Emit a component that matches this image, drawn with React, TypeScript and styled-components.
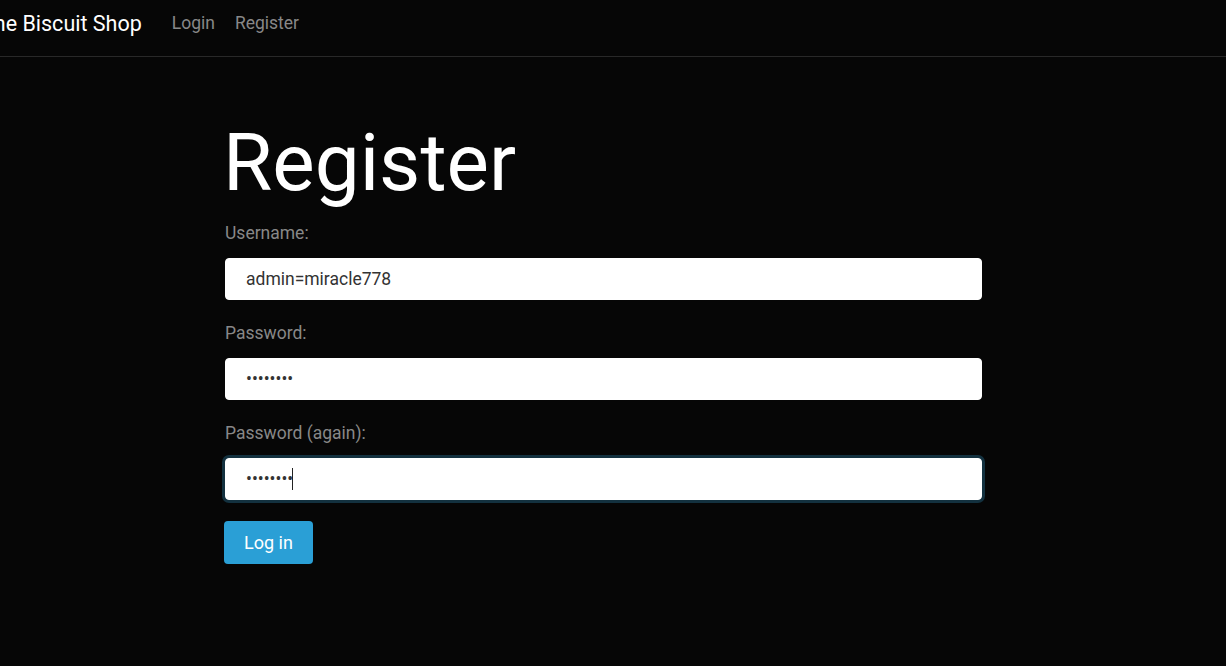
import React from "react";
import styled, { createGlobalStyle } from "styled-components";

const Global = createGlobalStyle`
  html, body { margin: 0; padding: 0; background: #060606; overflow: hidden; }
  body { font-family: Roboto, "Liberation Sans", sans-serif; color: #adafae; }
  * { box-sizing: border-box; }
`;

const Page = styled.div`
  width: 1226px;
  height: 666px;
  background: #060606;
`;

const Navbar = styled.nav`
  height: 57px;
  border-bottom: 1px solid #282828;
  display: flex;
  align-items: center;
  overflow: hidden;
`;

const Brand = styled.a`
  font-size: 21.5px;
  color: #fff;
  margin-left: -19px;
  margin-right: 30px;
  text-decoration: none;
  padding-bottom: 10px;
  white-space: nowrap;
`;

const NavLinks = styled.div`
  display: flex;
  gap: 20px;
  padding-bottom: 10px;
`;

const NavLink = styled.a`
  font-size: 17.5px;
  color: #888;
  text-decoration: none;
`;

const Main = styled.main`
  width: 757px;
  margin-left: 225px;
  padding-top: 58px;
`;

const Title = styled.h1`
  margin: 0 0 9px -2px;
  font-size: 80px;
  font-weight: 400;
  line-height: 96px;
  color: #fff;
`;

const Form = styled.form`
  display: flex;
  flex-direction: column;
`;

const Field = styled.div`
  display: flex;
  flex-direction: column;
  gap: 12px;
  margin-bottom: 20px;
`;

const Label = styled.label`
  font-size: 17.5px;
  line-height: 26px;
  color: #888;
`;

const InputWrap = styled.div`
  position: relative;
  width: 757px;
`;

const Input = styled.input<{ $focused?: boolean }>`
  display: block;
  width: 757px;
  height: 42px;
  border: 1px solid #fff;
  border-radius: 4px;
  background: #fff;
  padding: 0 20px;
  font-family: Roboto, "Liberation Sans", sans-serif;
  font-size: 17.5px;
  color: #333;
  outline: none;
  box-shadow: ${(p) => (p.$focused ? "0 0 0 3px #13313f" : "none")};
`;

const Caret = styled.span`
  position: absolute;
  left: 67px;
  top: 10px;
  width: 1px;
  height: 22px;
  background: #222;
`;

const Button = styled.button`
  align-self: flex-start;
  width: 89px;
  height: 43px;
  margin-top: 1px;
  margin-left: -1px;
  background: #2a9fd6;
  color: #fff;
  border: none;
  border-radius: 4px;
  font-family: Roboto, "Liberation Sans", sans-serif;
  font-size: 18px;
`;

export default function App() {
  return (
    <Page>
      <Global />
      <Navbar>
        <Brand href="#">The Biscuit Shop</Brand>
        <NavLinks>
          <NavLink href="#">Login</NavLink>
          <NavLink href="#">Register</NavLink>
        </NavLinks>
      </Navbar>
      <Main>
        <Title>Register</Title>
        <Form onSubmit={(e) => e.preventDefault()}>
          <Field>
            <Label>Username:</Label>
            <Input type="text" defaultValue="admin=miracle778" />
          </Field>
          <Field>
            <Label>Password:</Label>
            <Input type="password" defaultValue="miracle7" />
          </Field>
          <Field>
            <Label>Password (again):</Label>
            <InputWrap>
              <Input type="password" defaultValue="miracle7" $focused />
              <Caret />
            </InputWrap>
          </Field>
          <Button type="submit">Log in</Button>
        </Form>
      </Main>
    </Page>
  );
}
